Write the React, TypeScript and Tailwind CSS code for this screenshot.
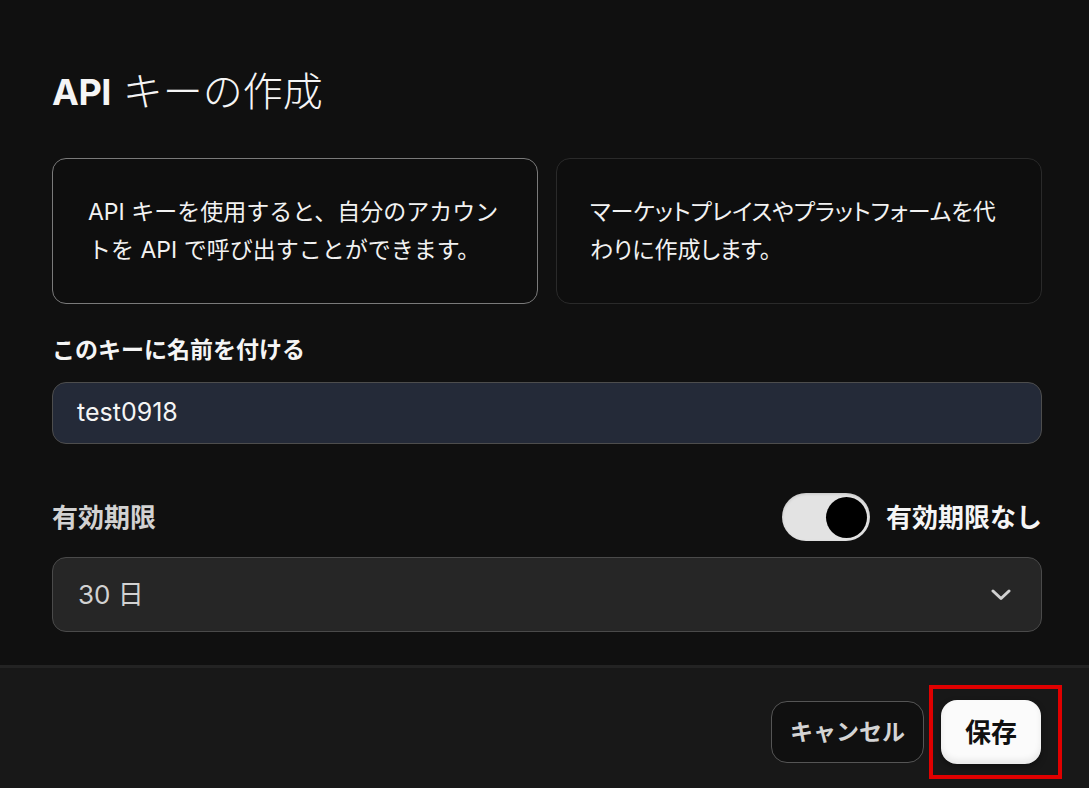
import React from "react";

export default function App() {
  return (
    <div className="relative w-[1089px] h-[788px] bg-[#101010] flex flex-col text-[#f5f5f5] font-['Inter','Noto_Sans_CJK_JP',sans-serif] overflow-hidden">
      <div className="flex-1 flex flex-col pl-[52px] pr-[47px] pt-[70px]">
        <h1 className="h-[44px] leading-[44px] flex items-center text-[40px] whitespace-nowrap">
          <span className="font-bold text-[36px] tracking-[-0.5px]">API</span>
          <span className="ml-[12px] font-light">キーの作成</span>
        </h1>

        <div className="mt-[44px] grid grid-cols-2 gap-[18px]">
          <div className="h-[146px] rounded-[14px] border-[1.5px] border-[#7a7a7a] bg-[#0e0e0e] flex items-center pl-[35px] pr-[10px]">
            <p className="text-[23px] leading-[38px] text-[#f2f2f2] whitespace-nowrap">
              API キーを使用すると、自分のアカウン
              <br />
              トを API で呼び出すことができます。
            </p>
          </div>
          <div className="h-[146px] rounded-[14px] border-[1.5px] border-[#2a2a2a] bg-[#0e0e0e] flex items-center pl-[33px] pr-[10px]">
            <p className="text-[23px] leading-[38px] text-[#f2f2f2] whitespace-nowrap [font-feature-settings:'palt']">
              マーケットプレイスやプラットフォームを代
              <br />
              わりに作成します。
            </p>
          </div>
        </div>

        <label className="mt-[32px] h-[28px] leading-[28px] text-[23px] font-bold text-[#f5f5f5]">
          このキーに名前を付ける
        </label>

        <div className="mt-[18px] h-[62px] rounded-[14px] border-[1.5px] border-[#4d4d4d] bg-[#242a38] flex items-center pl-[24px]">
          <span className="text-[25px] text-[#f5f5f5]">test0918</span>
        </div>

        <div className="mt-[49px] h-[48px] flex items-center justify-between">
          <span className="text-[26px] font-semibold text-[#d2d2d2]">有効期限</span>
          <div className="flex items-center gap-[16px]">
            <div className="w-[88px] h-[48px] rounded-full bg-[#e3e3e3] shadow-[inset_0_1px_3px_rgba(0,0,0,0.15)] flex items-center justify-end pr-[3px]">
              <div className="w-[41px] h-[41px] rounded-full bg-black" />
            </div>
            <span className="text-[26px] font-bold text-[#f5f5f5]">有効期限なし</span>
          </div>
        </div>

        <div className="mt-[16px] h-[75px] rounded-[14px] border-[1.5px] border-[#4a4a4a] bg-[#262626] flex items-center justify-between pl-[25px] pr-[30px]">
          <span className="text-[26px] text-[#d2d2d2]">30 日</span>
          <svg width="20" height="12" viewBox="0 0 20 12" fill="none">
            <path d="M2 2L10 9.5L18 2" stroke="#d0d0d0" strokeWidth="3" strokeLinecap="round" strokeLinejoin="round" />
          </svg>
        </div>
      </div>

      <div className="h-[123px] border-t-[3px] border-[#232323] bg-[#181818] flex justify-end items-start gap-[17px] pt-[33px] pr-[48px]">
        <button className="w-[153px] h-[62px] rounded-[16px] border-[1.5px] border-[#555555] bg-[#101010] text-[23px] font-bold text-[#d4d4d4] flex items-center justify-center">
          キャンセル
        </button>
        <button className="w-[100px] h-[64px] -mt-[1px] rounded-[16px] bg-[#fbfbfb] shadow-[0_3px_6px_rgba(0,0,0,0.35),inset_0_-4px_6px_rgba(0,0,0,0.08)] text-[26px] font-bold text-[#111111] flex items-center justify-center">
          保存
        </button>
      </div>

      <div className="absolute left-[929px] top-[685px] w-[133px] h-[94px] border-4 border-[#e00000] pointer-events-none" />
    </div>
  );
}
